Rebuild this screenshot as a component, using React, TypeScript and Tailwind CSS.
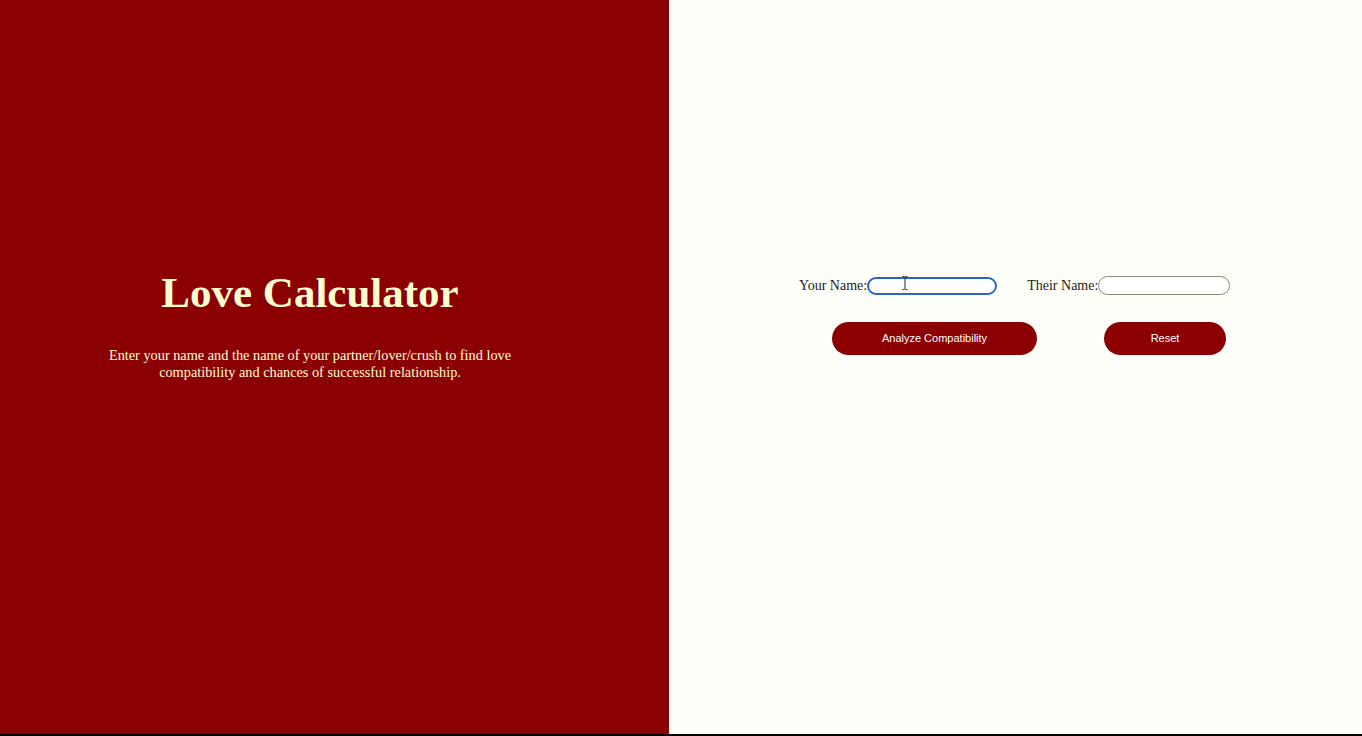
import React from "react";

export default function App() {
  return (
    <div className="w-[1362px] h-[736px] bg-black overflow-hidden">
      <div className="flex h-[734px]">
        <div className="w-[669px] h-full bg-[#8b0000] flex flex-col">
          <div className="w-[620px] pt-[268px] flex flex-col items-center text-center text-[#fffdd0]" style={{ fontFamily: '"Liberation Serif", "Times New Roman", serif' }}>
            <h1 className="text-[43px] font-bold leading-[50px]">Love Calculator</h1>
            <p className="mt-[29px] w-[440px] text-[14.3px] leading-[17px]">
              Enter your name and the name of your partner/lover/crush to find love compatibility and chances of successful relationship.
            </p>
          </div>
        </div>
        <div className="flex-1 h-full bg-[#fffffa] flex flex-col items-center pt-[275px]" style={{ fontFamily: '"Liberation Serif", "Times New Roman", serif' }}>
          <div className="w-[433px] flex flex-col">
            <div className="flex items-center text-[14px] text-[#222]">
              <label className="flex items-center">
                <span>Your Name:</span>
                <div className="relative">
                  <input className="w-[130px] h-[18px] rounded-full border-2 border-[#2a66c4] bg-white outline-none px-2 text-[13px]" />
                  <svg className="absolute left-[35px] top-[1px]" width="6" height="14" viewBox="0 0 6 14">
                    <path d="M0.5 0.5h2M3.5 0.5h2M3 1v12M0.5 13.5h2M3.5 13.5h2" stroke="#222" strokeWidth="1" fill="none" />
                  </svg>
                </div>
              </label>
              <label className="flex items-center ml-[30px]">
                <span>Their Name:</span>
                <input className="w-[132px] h-[19px] rounded-full border border-[#8a8a80] bg-white outline-none px-2 text-[13px]" />
              </label>
            </div>
            <div className="flex items-center mt-[26px] ml-[33px]" style={{ fontFamily: '"Liberation Sans", Arial, sans-serif' }}>
              <button className="w-[205px] h-[33px] rounded-full bg-[#8b0000] text-white text-[11px]">Analyze Compatibility</button>
              <button className="w-[122px] h-[33px] ml-[67px] rounded-full bg-[#8b0000] text-white text-[11px]">Reset</button>
            </div>
          </div>
        </div>
      </div>
    </div>
  );
}
